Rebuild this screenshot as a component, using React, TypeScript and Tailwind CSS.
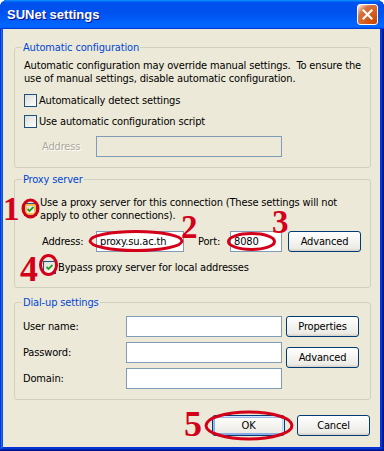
import type { ReactNode } from 'react'

const font = "font-['DejaVu_Sans_Condensed','Liberation_Sans',sans-serif]"

function CheckBox({ checked, hot }: { checked?: boolean; hot?: boolean }) {
  return (
    <span
      className={
        'flex h-[13px] w-[13px] shrink-0 items-center justify-center border border-[#1c5180] bg-[linear-gradient(135deg,#dcdcd7,#ffffff)] ' +
        (hot ? 'shadow-[inset_0_0_0_2px_#f8c04a]' : '')
      }
    >
      {checked && (
        <svg width="7" height="7" viewBox="0 0 7 7">
          <path d="M0.5 3 L2.5 5 L6.5 1" fill="none" stroke="#21a121" strokeWidth="1.8" />
        </svg>
      )}
    </span>
  )
}

function Field({ className, value, disabled }: { className: string; value?: string; disabled?: boolean }) {
  return (
    <div
      className={
        'flex h-[21px] items-center border border-[#7f9db9] px-[3px] text-black ' +
        (disabled ? 'bg-[#ece9d8] ' : 'bg-white ') +
        className
      }
    >
      {value}
    </div>
  )
}

function XpButton({ children, primary, className = '' }: { children: ReactNode; primary?: boolean; className?: string }) {
  return (
    <button
      className={
        'flex h-[21px] w-[73px] items-center justify-center rounded-[3px] border border-[#003c74] bg-[linear-gradient(180deg,#ffffff,#ecebe6_86%,#d6d0c5)] text-[11px] leading-[13px] text-black ' +
        (primary
          ? 'shadow-[inset_-1px_1px_#cee7ff,inset_1px_2px_#98b8ea,inset_-2px_2px_#bcd4f6,inset_1px_-1px_#89ade4,inset_2px_-2px_#89ade4] '
          : '') +
        className
      }
    >
      {children}
    </button>
  )
}

function Group({ title, children, className = '' }: { title: string; children: ReactNode; className?: string }) {
  return (
    <fieldset className={'ml-[11px] mr-[9px] rounded-[3px] border border-[#d0d0bf] pl-[9px] pr-[8px] ' + className}>
      <legend className="-ml-[2px] px-[1px] leading-[13px] text-[#0046d5]">{title}</legend>
      {children}
    </fieldset>
  )
}

const mark = "pointer-events-none absolute font-['Liberation_Serif',serif] font-bold leading-[24px] text-[#d4001a]"

export default function App() {
  return (
    <div className={'relative h-[451px] w-[384px] overflow-hidden bg-white text-[11px] leading-[13px] tracking-[-0.15px] ' + font}>
      <div className="flex h-full flex-col rounded-t-[8px] bg-[#0831d9] shadow-[inset_-1px_-1px_#00138c,inset_1px_1px_#0831d9,inset_-2px_-2px_#001ea0,inset_2px_2px_#166aee,inset_-3px_-3px_#003bda,inset_3px_3px_#0855dd]">
        {/* title bar */}
        <div className="flex h-[29px] shrink-0 items-center justify-between rounded-t-[7px] bg-[linear-gradient(180deg,#0997ff,#0053ee_8%,#0050ee_40%,#0066ff_88%,#0066ff_93%,#005bff_95%,#003dd7_96%,#003dd7)] pl-[7px] pr-[6px]">
          <span className="font-['Liberation_Sans',sans-serif] text-[13px] font-bold tracking-normal text-white [text-shadow:1px_1px_#0f1089]">
            SUNet settings
          </span>
          <span className="flex h-[21px] w-[21px] items-center justify-center rounded-[3px] border border-white bg-[radial-gradient(circle_at_90%_90%,#cc4600_0%,#dc6527_55%,#cd7546_70%,#ffccb2_90%,#ffffff_100%)]">
            <svg width="11" height="11" viewBox="0 0 11 11">
              <path d="M1.5 1.5 L9.5 9.5 M9.5 1.5 L1.5 9.5" stroke="#fff" strokeWidth="2.2" strokeLinecap="square" />
            </svg>
          </span>
        </div>

        {/* body */}
        <div className="mb-[4px] ml-[3px] mr-[4px] flex flex-1 flex-col bg-[#ece9d8] pt-[12px] text-black">
          <Group title="Automatic configuration" className="pb-[10px]">
            <p className="mt-[5px] whitespace-nowrap">
              Automatic configuration may override manual settings.{'\u00a0 '}To ensure the
              <br />
              use of manual settings, disable automatic configuration.
            </p>
            <label className="mt-[9px] flex items-center gap-[2px]">
              <CheckBox />
              <span>Automatically detect settings</span>
            </label>
            <label className="mt-[8px] flex items-center gap-[2px]">
              <CheckBox />
              <span>Use automatic configuration script</span>
            </label>
            <div className="mt-[8px] flex items-center">
              <span className="ml-[18px] w-[54px] text-[#aca899] [text-shadow:1px_1px_#ffffff]">Address</span>
              <Field className="w-[186px]" disabled />
            </div>
          </Group>

          <Group title="Proxy server" className="mt-[5px] pb-[13px]">
            <label className="mt-[10px] flex items-center gap-[3px]">
              <CheckBox checked hot />
              <span className="whitespace-nowrap">
                Use a proxy server for this connection (These settings will not
                <br />
                apply to other connections).
              </span>
            </label>
            <div className="mt-[9px] flex items-center">
              <span className="ml-[18px] w-[54px]">Address:</span>
              <Field className="w-[88px]" value="proxy.su.ac.th" />
              <span className="ml-[14px] w-[32px]">Port:</span>
              <Field className="w-[52px]" value="8080" />
              <XpButton className="ml-[6px] w-[72px]">Advanced</XpButton>
            </div>
            <label className="ml-[19px] mt-[9px] flex items-center gap-[2px]">
              <CheckBox checked />
              <span>Bypass proxy server for local addresses</span>
            </label>
          </Group>

          <Group title="Dial-up settings" className="mt-[8px] pb-[10px]">
            <div className="mt-[7px] flex items-start">
              <div className="flex flex-col gap-[5px]">
                {['User name:', 'Password:', 'Domain:'].map(label => (
                  <div key={label} className="flex items-center">
                    <span className="-ml-[1px] w-[103px]">{label}</span>
                    <Field className="w-[156px]" />
                  </div>
                ))}
              </div>
              <div className="ml-[4px] flex flex-col gap-[10px]">
                <XpButton>Properties</XpButton>
                <XpButton>Advanced</XpButton>
              </div>
            </div>
          </Group>

          <div className="mr-[10px] mt-[15px] flex justify-end gap-[12px]">
            <XpButton primary>OK</XpButton>
            <XpButton>Cancel</XpButton>
          </div>
        </div>
      </div>

      {/* red annotations drawn over the screenshot */}
      <svg className="pointer-events-none absolute inset-0" width="384" height="451">
        <g fill="none" stroke="#d4001a" strokeWidth="3">
          <ellipse cx="30.5" cy="208.5" rx="7.5" ry="8.5" />
          <ellipse cx="136" cy="241" rx="46" ry="9.5" />
          <ellipse cx="251.5" cy="241.5" rx="23" ry="8" />
          <ellipse cx="48.5" cy="265" rx="8" ry="9.5" />
          <ellipse cx="249" cy="425.5" rx="43" ry="13.5" />
        </g>
      </svg>
      <span className={mark + ' left-[3px] top-[197px] text-[33px]'}>1</span>
      <span className={mark + ' left-[181px] top-[215px] text-[33px]'}>2</span>
      <span className={mark + ' left-[272px] top-[210px] text-[33px]'}>3</span>
      <span className={mark + ' left-[20px] top-[257px] text-[36px]'}>4</span>
      <span className={mark + ' left-[184px] top-[412px] text-[36px]'}>5</span>
    </div>
  )
}
